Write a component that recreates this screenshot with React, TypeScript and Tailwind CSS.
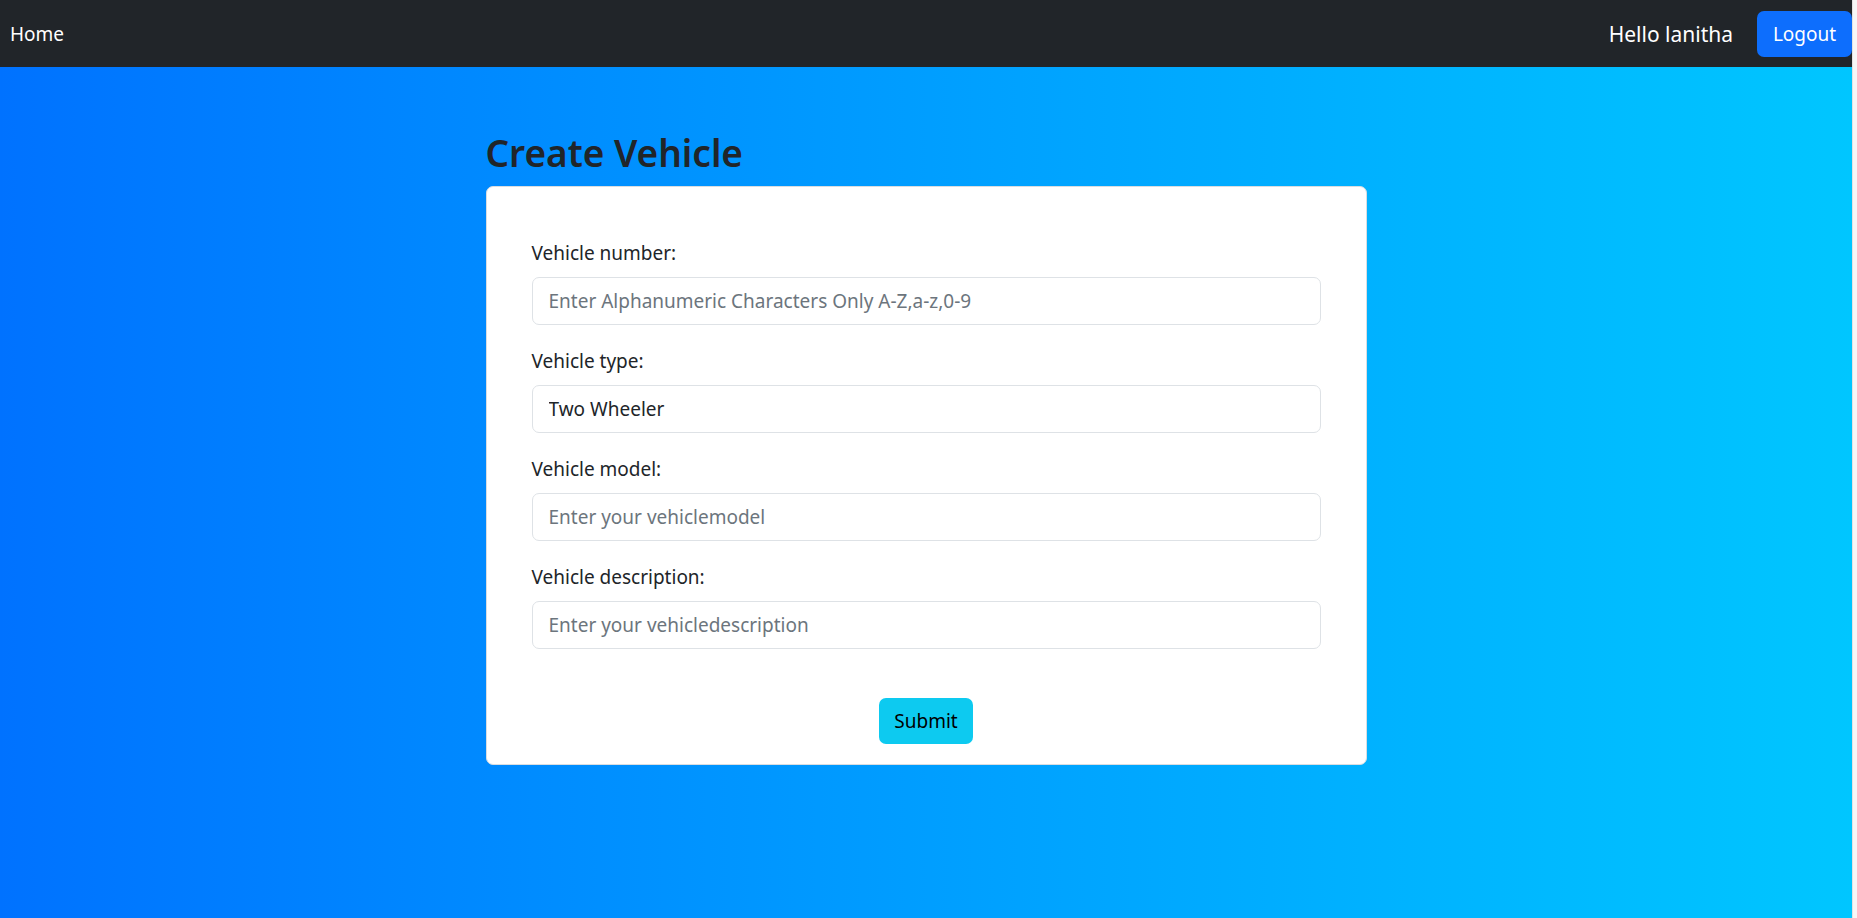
import React from "react";

const font = { fontFamily: '"Segoe UI", "Noto Sans", "Open Sans", sans-serif' };

function Field({ label, placeholder, value }: { label: string; placeholder?: string; value?: string }) {
  return (
    <div className="flex flex-col">
      <label className="mb-[9px] text-[19px] leading-[30px] text-[#212529]">{label}</label>
      <input
        type="text"
        placeholder={placeholder}
        defaultValue={value}
        className="h-[48px] w-full rounded-[7px] border border-[#dee2e6] bg-white px-[16px] text-[19px] text-[#212529] outline-none placeholder:text-[#6c757d]"
        style={font}
      />
    </div>
  );
}

export default function App() {
  return (
    <div className="flex min-h-screen w-full" style={font}>
      <div className="flex min-h-screen flex-1 flex-col bg-linear-to-r from-[#0072ff] to-[#00c6ff]">
        <nav className="flex h-[67px] items-center justify-between bg-[#212529] pl-[10px]">
          <a className="text-[19px] leading-[30px] text-white">Home</a>
          <div className="flex items-center gap-[24px]">
            <span className="text-[21px] leading-[30px] text-white">Hello lanitha</span>
            <button className="h-[46px] w-[95px] rounded-[7px] bg-[#0d6efd] text-[19px] leading-[30px] text-white">Logout</button>
          </div>
        </nav>
        <main className="mx-auto mt-[62px] w-[881px]">
          <h2 className="mb-[9px] text-[37px] font-semibold leading-[48px] text-[#212529]">Create Vehicle</h2>
          <div className="rounded-[7px] border border-[#d9dde1] bg-white px-[45px] pb-[20px] pt-[51px]">
            <div className="flex flex-col gap-[21px]">
              <Field label="Vehicle number:" placeholder="Enter Alphanumeric Characters Only A-Z,a-z,0-9" />
              <Field label="Vehicle type:" value="Two Wheeler" />
              <Field label="Vehicle model:" placeholder="Enter your vehiclemodel" />
              <Field label="Vehicle description:" placeholder="Enter your vehicledescription" />
            </div>
            <div className="mt-[49px] flex justify-center">
              <button className="h-[46px] w-[94px] rounded-[7px] bg-[#0dcaf0] text-[19px] leading-[30px] text-black">Submit</button>
            </div>
          </div>
        </main>
      </div>
      <div className="w-[5px] border-l border-[#e2e2e2] bg-[#f7f7f7]" />
    </div>
  );
}
